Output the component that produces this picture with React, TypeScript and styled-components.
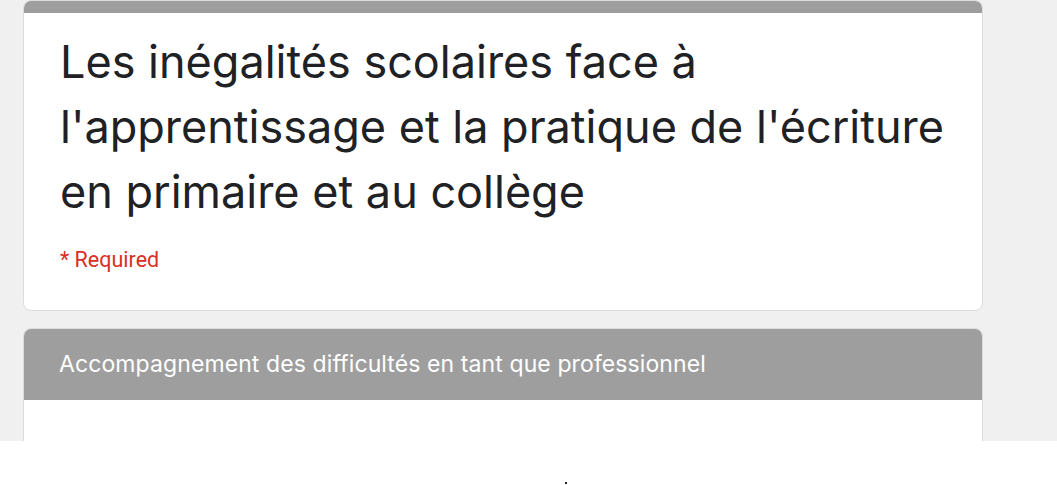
import React from "react";
import styled, { createGlobalStyle } from "styled-components";

const Global = createGlobalStyle`
  html, body { margin: 0; padding: 0; background: #ffffff; }
  body { font-family: Inter, "Noto Sans", sans-serif; }
`;

const Page = styled.div`
  display: flex;
  flex-direction: column;
  width: 1057px;
  height: 485px;
  overflow: hidden;
`;

const Main = styled.main`
  background: #f0f0f0;
  height: 441px;
  padding-left: 23px;
  box-sizing: border-box;
  display: flex;
  flex-direction: column;
  gap: 17px;
  overflow: hidden;
`;

const Card = styled.section`
  width: 960px;
  box-sizing: border-box;
  background: #ffffff;
  border: 1px solid #dadce0;
  border-radius: 8px;
  overflow: hidden;
  flex-shrink: 0;
`;

const TopBar = styled.div`
  height: 13px;
  background: #9e9e9e;
  margin: -1px -1px 0;
`;

const CardBody = styled.div<{ $pt: number; $pb: number }>`
  padding: ${(p) => p.$pt}px 36px ${(p) => p.$pb}px;
`;

const Title = styled.h1`
  margin: 0;
  font-family: Inter, "Noto Sans", sans-serif;
  font-weight: 400;
  font-size: 45px;
  line-height: 65px;
  color: #202124;
`;

const Required = styled.div`
  margin-top: 24px;
  font-family: Roboto, sans-serif;
  font-size: 21.5px;
  line-height: 24px;
  color: #d93025;
`;

const SectionHeader = styled.div`
  background: #9e9e9e;
  height: 72px;
  margin: -1px -1px 0;
  padding: 0 36px;
  display: flex;
  align-items: center;
  color: #ffffff;
  font-family: Inter, "Noto Sans", sans-serif;
  font-size: 23px;
  letter-spacing: 0.1px;
`;

const SectionBody = styled.div`
  height: 60px;
`;

const Footer = styled.footer`
  height: 44px;
  background: #ffffff;
  position: relative;
`;

const Dot = styled.span`
  position: absolute;
  left: 565px;
  top: 41px;
  width: 2px;
  height: 2px;
  background: #222;
`;

export default function App() {
  return (
    <>
      <Global />
      <Page>
        <Main>
          <Card>
            <TopBar />
            <CardBody $pt={16} $pb={38}>
              <Title>
                Les inégalités scolaires face à l'apprentissage et la pratique de l'écriture en primaire et au collège
              </Title>
              <Required>* Required</Required>
            </CardBody>
          </Card>
          <Card>
            <SectionHeader>Accompagnement des difficultés en tant que professionnel</SectionHeader>
            <SectionBody />
          </Card>
        </Main>
        <Footer>
          <Dot />
        </Footer>
      </Page>
    </>
  );
}
